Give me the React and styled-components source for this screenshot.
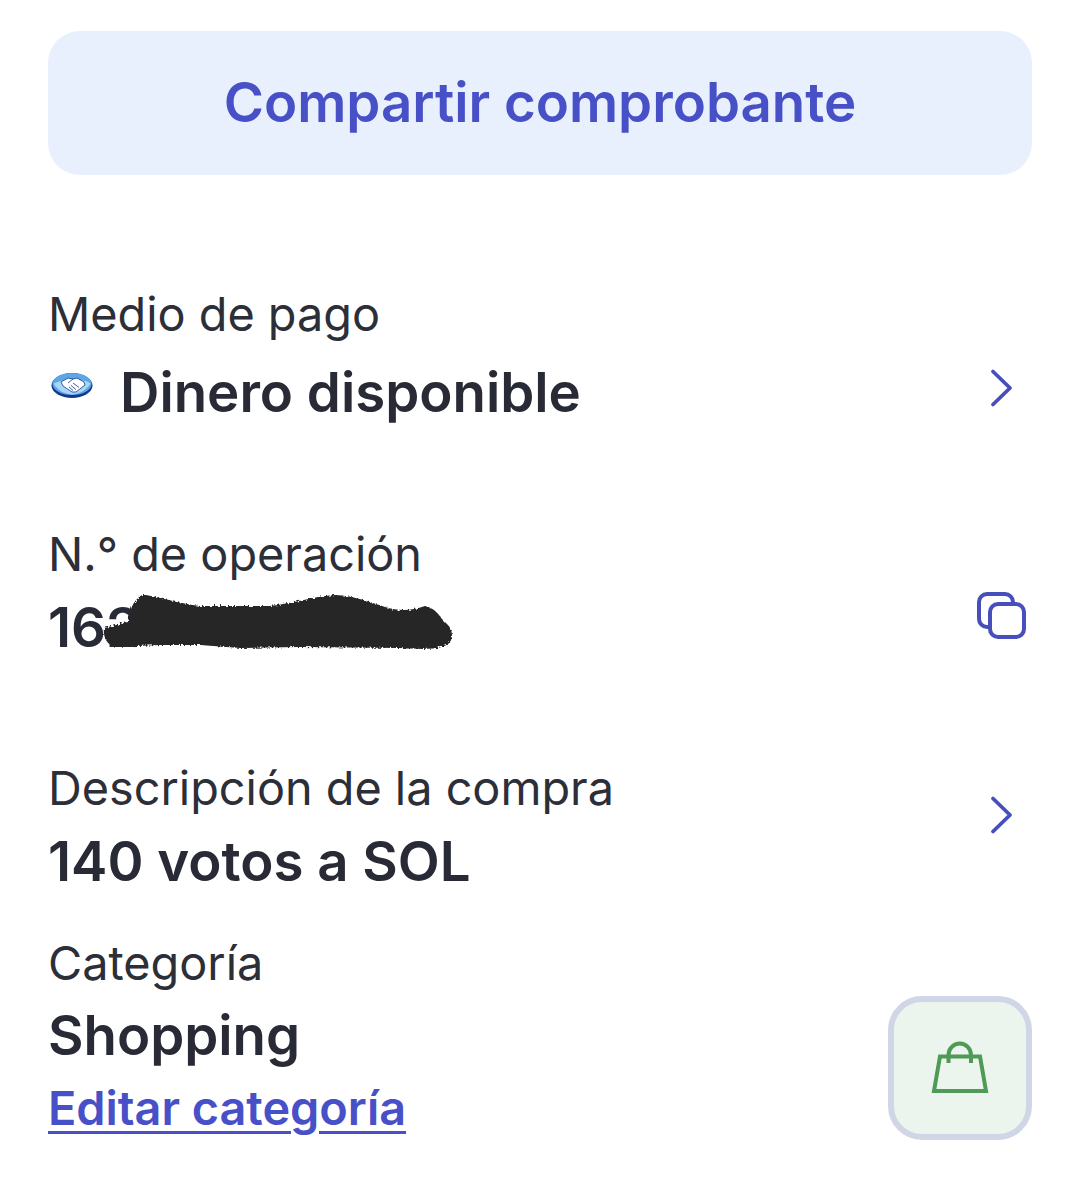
import React from 'react';
import styled, { createGlobalStyle } from 'styled-components';

const GlobalStyle = createGlobalStyle`
  html, body {
    margin: 0;
    padding: 0;
    background: #ffffff;
  }
  body {
    font-family: Inter, "Noto Sans", sans-serif;
    color: #282a35;
  }
`;

const Page = styled.div`
  width: 1079px;
  height: 1199px;
  box-sizing: border-box;
  padding: 31px 47px 0 48px;
  overflow: hidden;
`;

const ShareButton = styled.button`
  display: block;
  width: 100%;
  height: 144px;
  padding: 0 0 2px;
  border: none;
  border-radius: 32px;
  background: #e8f0fd;
  color: #4850c8;
  font-family: inherit;
  font-size: 54.6px;
  font-weight: 600;
`;

const Row = styled.section`
  display: flex;
  justify-content: space-between;
  align-items: ${({ $align }) => $align || 'flex-start'};
  margin-top: ${({ $top }) => $top}px;
`;

const Info = styled.div`
  display: flex;
  flex-direction: column;
  min-width: 0;
`;

const Label = styled.div`
  font-size: 46.8px;
  line-height: 56px;
  font-weight: 400;
  color: #2c2e38;
`;

const Value = styled.div`
  position: relative;
  display: flex;
  align-items: center;
  font-size: 54.6px;
  line-height: 62px;
  font-weight: 600;
  margin-top: ${({ $top }) => $top || 0}px;
`;

const EditLink = styled.a`
  font-size: 46.8px;
  line-height: 56px;
  font-weight: 600;
  color: #4850c8;
  text-decoration: underline;
  text-decoration-thickness: 3px;
  text-underline-offset: 6px;
  margin-top: 14px;
`;

const Logo = styled.svg`
  width: 42px;
  height: 28px;
  margin: -14px 27px 0 3px;
  flex: none;
`;

const Scribble = styled.svg`
  position: absolute;
  left: 52px;
  top: -4px;
  width: 356px;
  height: 60px;
`;

const IconButton = styled.div`
  display: flex;
  color: #474fbc;
  margin: ${({ $margin }) => $margin};
`;

const CategoryTile = styled.div`
  display: flex;
  align-items: center;
  justify-content: center;
  box-sizing: border-box;
  width: 144px;
  height: 144px;
  margin-top: 61px;
  border: 6px solid #d0d6e6;
  border-radius: 34px;
  background: #ecf4ee;
`;

const Chevron = () => (
  <svg width="28" height="40" viewBox="0 0 28 40" fill="none" stroke="currentColor" strokeWidth="3.8" strokeLinecap="round" strokeLinejoin="round">
    <path d="M5 3.5 L22 20 L5 36.5" />
  </svg>
);

const CopyIcon = () => (
  <svg width="52" height="50" viewBox="0 0 52 50" fill="none" stroke="currentColor" strokeWidth="4" strokeLinejoin="round">
    <rect x="13" y="13" width="34" height="33" rx="8" />
    <path d="M13 36 H10 a8 8 0 0 1 -8 -8 V11 a8 8 0 0 1 8 -8 H28 a8 8 0 0 1 8 8" />
  </svg>
);

const BagIcon = () => (
  <svg width="60" height="56" viewBox="0 0 60 56" fill="none" stroke="#4f9a54" strokeWidth="4">
    <path d="M10 16.5 H50 L56 51 H4 Z" />
    <path d="M18.5 23 V15 a11.25 11.5 0 0 1 22.5 0 V23" />
  </svg>
);

const MercadoLogo = () => (
  <Logo viewBox="0 0 42 28">
    <ellipse cx="21" cy="14.5" rx="20.5" ry="12.5" fill="#17388f" />
    <ellipse cx="21" cy="13" rx="19.5" ry="11" fill="#5aa9e6" />
    <path d="M2.5 12.5 C10 9 14 9 18 10 L28 10 C32 9 36 10 39.5 12.5 C36 18 30 23 21 23.5 C12 23 6 18 2.5 12.5 Z" fill="#a9d6f5" />
    <path d="M10 11 L17 7 L22 8 L26 7 L33 11 L34 14 L25 21 L21 21 L12 15 Z" fill="#ffffff" stroke="#17388f" strokeWidth="0.8" strokeLinejoin="round" />
    <path d="M17 12 L22 8 M22 12 L28 16.5 M20 14.5 L25 18.5 M18 16 L22 19.5" stroke="#17388f" strokeWidth="0.8" fill="none" />
  </Logo>
);

const Redaction = () => (
  <Scribble viewBox="0 0 356 60">
    <defs>
      <filter id="rough" x="-5%" y="-20%" width="110%" height="140%">
        <feTurbulence type="fractalNoise" baseFrequency="0.5" numOctaves="2" seed="4" />
        <feDisplacementMap in="SourceGraphic" scale="5" />
      </filter>
    </defs>
    <path
      filter="url(#rough)"
      d="M4 36 L28 30 C30 20 31 10 42 3 C55 3 70 10 100 14 L170 14 C190 12 215 4 235 3 C255 4 270 10 285 15 C300 20 315 18 325 14 C335 16 340 24 344 30 C352 34 354 44 350 50 C345 57 330 58 300 56 L200 55 L140 56 L100 53 L60 53 L15 55 C6 52 3 44 4 36 Z"
      fill="#262628"
    />
  </Scribble>
);

export default function App() {
  return (
    <>
      <GlobalStyle />
      <Page>
        <ShareButton>Compartir comprobante</ShareButton>

        <Row $top={111} $align="flex-end">
          <Info>
            <Label>Medio de pago</Label>
            <Value $top={19}>
              <MercadoLogo />
              Dinero disponible
            </Value>
          </Info>
          <IconButton $margin="0 16px 15px 0"><Chevron /></IconButton>
        </Row>

        <Row $top={103} $align="flex-end">
          <Info>
            <Label>N.° de operación</Label>
            <Value $top={14}>
              162
              <Redaction />
            </Value>
          </Info>
          <IconButton $margin="0 3px 17px 0"><CopyIcon /></IconButton>
        </Row>

        <Row $top={102} $align="center">
          <Info>
            <Label>Descripción de la compra</Label>
            <Value $top={14}>140 votos a SOL</Value>
          </Info>
          <IconButton $margin="0 16px 22px 0"><Chevron /></IconButton>
        </Row>

        <Row $top={43}>
          <Info>
            <Label>Categoría</Label>
            <Value $top={13}>Shopping</Value>
            <EditLink>Editar categoría</EditLink>
          </Info>
          <CategoryTile><BagIcon /></CategoryTile>
        </Row>
      </Page>
    </>
  );
}
